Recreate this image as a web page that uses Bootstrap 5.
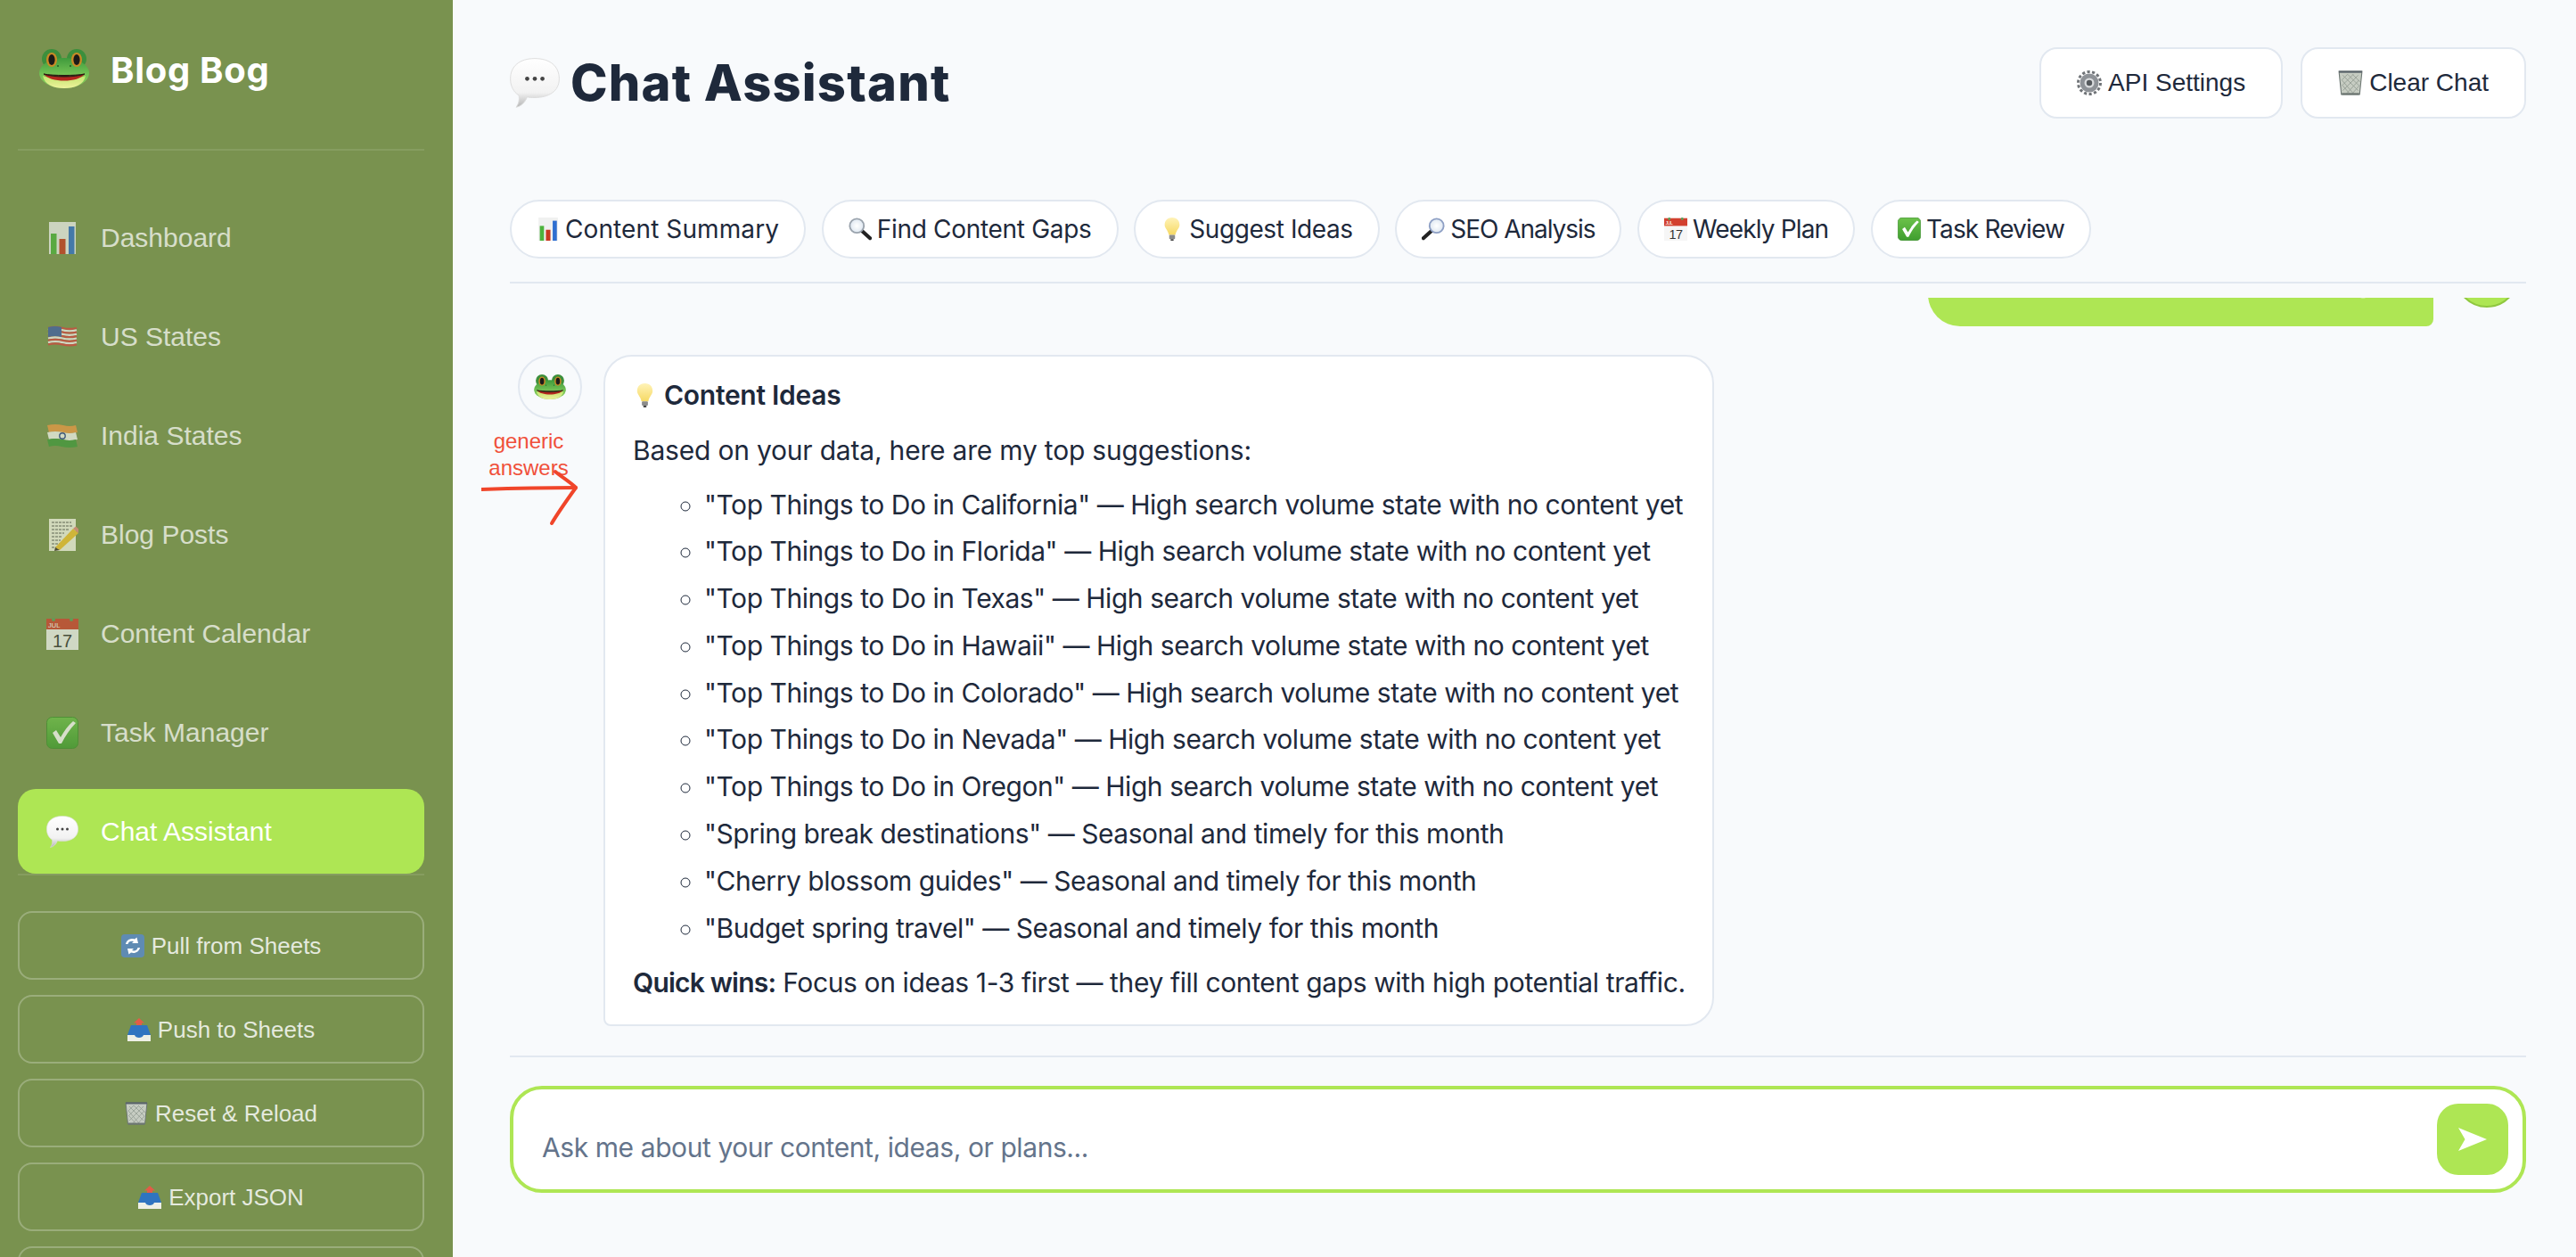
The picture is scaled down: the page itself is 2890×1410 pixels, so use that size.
<!doctype html>
<html lang="en">
<head>
<meta charset="utf-8">
<title>Blog Bog - Chat Assistant</title>
<link href="https://cdn.jsdelivr.net/npm/bootstrap@5.3.0/dist/css/bootstrap.min.css" rel="stylesheet">
<style>
html,body{height:100%;overflow:hidden}
body{background:#f8fafc;color:#1e293b;font-family:"Liberation Sans",Arial,sans-serif}
.shell{height:1410px;position:relative}
.side{width:508px;flex:0 0 508px;background:#79924f;padding:0 32px 0 20px;overflow:hidden}
.side>*{flex-shrink:0}
.brand{height:169px;border-bottom:2px solid rgba(255,255,255,.1);padding:55px 0 0 24px;color:#fff;font:700 40px/44px Inter,sans-serif;letter-spacing:.7px;gap:24px}
.brandtxt{margin-top:2px}
.navlist{padding-top:50px;gap:16px}
.navitem{height:95px;padding-left:32px;gap:25px;font-size:30px;color:#fff;opacity:.7;text-decoration:none;border-radius:20px}
.navitem.on{opacity:1;background:#aee654}
.acts{border-top:2px solid rgba(255,255,255,.1);padding-top:40px;gap:17px}
.actbtn{height:77px;flex:0 0 77px;border:2px solid rgba(255,255,255,.25);border-radius:16px;color:rgba(255,255,255,.82);font-size:26px;line-height:1;background:transparent;gap:8px;padding:0}
.mainp{padding:0 56px 0 64px;min-width:0}
.top{height:224px;padding-top:53px}
.pagetitle{font:800 56px/80px Inter,sans-serif;color:#1e293b;margin:0;gap:12px;letter-spacing:1.2px}
.topbtn{height:80px;background:#fff;border:2px solid #e2e8f0;border-radius:20px;font-size:28px;color:#1e293b;padding:0 40px 0 40px;gap:7px;line-height:1}
.pillbar{padding-bottom:26px;border-bottom:2px solid #e2e8f0;gap:17.6px}
.pill{height:66px;background:#fff;border:2px solid #e2e8f0;border-radius:33px;font:400 28px/1 Inter,sans-serif;color:#1e293b;padding:0 28px;gap:6px}
.ls1{letter-spacing:.1px}.ls2{letter-spacing:-.3px}.ls3{letter-spacing:-.4px}.ls4{letter-spacing:-1.05px}.ls5{letter-spacing:-.85px}
.msgs{margin-top:16px;overflow:hidden;padding-bottom:33px;gap:32px;min-height:0}
.urow{gap:24px;padding-right:8px}
.ububble{width:567px;height:120px;background:#aee654;color:#fff;border-radius:36px 36px 8px 36px;padding:0 30px 23px 14px;font:400 30px/51px Inter,sans-serif;letter-spacing:-.45px;white-space:nowrap;overflow:hidden}
.uav{width:72px;height:72px;flex:0 0 72px;border-radius:50%;background:#aee654;border:2px solid #8fc73f;margin-bottom:21px}
.botrow{gap:24px;padding-left:9px}
.botav{width:72px;height:72px;flex:0 0 72px;border-radius:50%;border:2px solid #e2e8f0;background:#f8fafc}
.bbubble{width:1246px;height:753px;background:#fff;border:2px solid #e2e8f0;border-radius:32px 32px 32px 8px;padding:13px 20px 0 31px;font:400 30px/53px Inter,sans-serif}
.bhead{font-weight:600;gap:8px;height:60px;letter-spacing:-.28px}
.bpara{margin:0;height:66.5px;line-height:64px;letter-spacing:-.2px}
.bquick{margin:4.5px 0 0;line-height:61px;white-space:nowrap;letter-spacing:-.38px}
.bquick strong{letter-spacing:-.8px}
.blist{margin:0;padding-left:80px;list-style:circle;letter-spacing:-.45px}
.blist li{height:52.8px;line-height:52.8px;white-space:nowrap}
.inwrap{border-top:2px solid #e2e8f0;padding-top:32px;height:226px;flex:0 0 226px}
.inbox{height:120px;border:4px solid #aee654;border-radius:36px;background:#fff;padding:0 16px 0 32px}
.inbox textarea{border:0;padding:0;background:transparent;box-shadow:none;resize:none;font:400 30px/40px Inter,sans-serif;letter-spacing:-.42px;color:#1e293b;height:40px;min-height:40px;margin-top:17px}
.inbox textarea::placeholder{color:#64748b;opacity:1}
.sendbtn{width:80px;height:80px;flex:0 0 80px;border-radius:24px;background:#aee654;border:0;padding:0}
.note{position:absolute;left:530px;top:480px;width:126px;height:112px;color:#f0503a;font-size:24px;line-height:30px;text-align:center;pointer-events:none}
.notearrow{position:absolute;left:10px;top:45px}
.fade{position:absolute;left:0;right:0;bottom:0;height:70px;background:linear-gradient(to bottom,rgba(60,70,80,0),rgba(60,70,80,.09));pointer-events:none}
</style>
</head>
<body>
<svg class="d-block" width="0" height="0" aria-hidden="true">
<defs>
<linearGradient id="gfrog" x1="0" y1="0" x2="0" y2="1"><stop offset="0" stop-color="#3f9a3c"/><stop offset=".55" stop-color="#74c255"/><stop offset="1" stop-color="#8ccf5c"/></linearGradient>
<linearGradient id="gchin" x1="0" y1="0" x2="0" y2="1"><stop offset="0" stop-color="#c3e56d"/><stop offset="1" stop-color="#eef29c"/></linearGradient>
<linearGradient id="gcheck" x1="0" y1="0" x2="0" y2="1"><stop offset="0" stop-color="#6cc24a"/><stop offset="1" stop-color="#3f9e2f"/></linearGradient>
<linearGradient id="gbub" x1="0" y1="0" x2="0" y2="1"><stop offset="0" stop-color="#fff"/><stop offset=".7" stop-color="#f2f2f2"/><stop offset="1" stop-color="#b5b5b5"/></linearGradient>
<linearGradient id="gbulb" x1="0" y1="0" x2="0" y2="1"><stop offset="0" stop-color="#fff3b8"/><stop offset="1" stop-color="#f6d964"/></linearGradient>
<radialGradient id="gglass"><stop offset="0" stop-color="#fff"/><stop offset="1" stop-color="#dfe8f2"/></radialGradient>
<symbol id="i-frog" viewBox="0 0 56 44">
<circle cx="14" cy="11" r="11" fill="#3c8f3c"/><circle cx="42" cy="11" r="11" fill="#3c8f3c"/>
<ellipse cx="28" cy="27" rx="28" ry="17" fill="url(#gfrog)"/>
<path d="M4 30C14 34 42 34 52 30C50 40 40 44 28 44C16 44 6 40 4 30Z" fill="url(#gchin)"/>
<path d="M5 28C16 32 40 32 51 28C44 38 12 38 5 28Z" fill="#b3261e"/>
<path d="M5 28C16 32 40 32 51 28C40 30 16 30 5 28Z" fill="#2a1a12" stroke="#2a1a12"/>
<ellipse cx="14" cy="12" rx="6" ry="8" fill="#c98a26"/><ellipse cx="42" cy="12" rx="6" ry="8" fill="#c98a26"/>
<ellipse cx="14" cy="12" rx="3.6" ry="6" fill="#1c1a18"/><ellipse cx="42" cy="12" rx="3.6" ry="6" fill="#1c1a18"/>
<circle cx="21" cy="19" r="1" fill="#1f5c22"/><circle cx="35" cy="19" r="1" fill="#1f5c22"/>
</symbol>
<symbol id="i-chart" viewBox="0 0 36 36">
<rect x="3" y="0" width="30" height="36" fill="#f0f1f0"/>
<rect x="5" y="13" width="6.5" height="23" fill="#4cb33c"/><rect x="14.500" y="19" width="7" height="17" fill="#c9381f"/><rect x="25" y="5" width="6.500" height="31" fill="#2f6fd0"/>
</symbol>
<symbol id="i-us" viewBox="0 0 36 36">
<g fill="none" stroke-width="2.300">
<path d="M2 8q8-2 16 0t16 0" stroke="#d6433f"/><path d="M2 10.300q8-2 16 0t16 0" stroke="#f6f3f3"/>
<path d="M2 12.600q8-2 16 0t16 0" stroke="#d6433f"/><path d="M2 14.900q8-2 16 0t16 0" stroke="#f6f3f3"/>
<path d="M2 17.200q8-2 16 0t16 0" stroke="#d6433f"/><path d="M2 19.500q8-2 16 0t16 0" stroke="#f6f3f3"/>
<path d="M2 21.800q8-2 16 0t16 0" stroke="#d6433f"/><path d="M2 24.100q8-2 16 0t16 0" stroke="#f6f3f3"/>
<path d="M2 26.400q8-2 16 0t16 0" stroke="#d6433f"/>
</g>
<path d="M2 7q8-2 15 0V18q-7-2-15 0Z" fill="#3f5da8"/>
</symbol>
<symbol id="i-in" viewBox="0 0 36 36">
<g fill="none" stroke-width="8">
<path d="M2 10q8-2 16 0t16 0" stroke="#ef9a45"/><path d="M2 18q8-2 16 0t16 0" stroke="#f7f7f3"/><path d="M2 26q8-2 16 0t16 0" stroke="#3f9a3c"/>
</g>
<circle cx="18" cy="18" r="3.200" fill="none" stroke="#27408b" stroke-width="1.400"/>
</symbol>
<symbol id="i-memo" viewBox="0 0 36 36">
<rect x="3" y="0" width="30" height="36" fill="#f8f7ea"/>
<path d="M6 4h22M6 8h24M6 12h20M6 16h14M6 20h12M6 24h10M6 28h10M6 32h8" stroke="#555" stroke-width="1" stroke-dasharray="3 1"/>
<path d="M10 32L30 11L36 16L15 35Z" fill="#f4c430"/><path d="M30 11L33 8.500L38 13L36 16Z" fill="#e98b80"/><path d="M10 32L15 35L9 36Z" fill="#3a2f25"/>
</symbol>
<symbol id="i-cal" viewBox="0 0 36 36">
<rect x="0" y="1" width="36" height="35" fill="#f6f6f6"/><rect x="0" y="1" width="36" height="12" fill="#d2402f"/>
<circle cx="8" cy="2" r="2" fill="#5aa05a"/><circle cx="28" cy="2" r="2" fill="#5aa05a"/>
<text x="2" y="11" font-family="Liberation Sans" font-size="7.500" fill="#fff">JUL</text>
<text x="18" y="33" font-family="Liberation Sans" font-size="20" text-anchor="middle" fill="#333">17</text>
</symbol>
<symbol id="i-check" viewBox="0 0 36 36">
<rect x="0.500" y="0.500" width="35" height="35" rx="6" fill="url(#gcheck)" stroke="#3d8f2c"/>
<path d="M7 18L11 15L16 23C20 16 24 10 30 5L33 7C26 14 21 22 17 30L14 30Z" fill="#fff"/>
</symbol>
<symbol id="i-bub" viewBox="0 0 36 36">
<path d="M18 .4C29 .4 35.600 6 35.600 15C35.600 24 28 28.600 18 28.600C16 28.600 14 28.600 12.500 28.100C11 32 8 35 4.500 35.500C6.500 33 7 30 6.500 27C2.500 24.500 .4 20 .4 15C.4 6 7 .4 18 .4Z" fill="url(#gbub)" stroke="#dcdcdc" stroke-width=".6"/>
<circle cx="12.500" cy="15" r="1.500" fill="#444"/><circle cx="18" cy="15" r="1.500" fill="#444"/><circle cx="23.500" cy="15" r="1.500" fill="#444"/>
</symbol>
<symbol id="i-sync" viewBox="0 0 26 26">
<rect width="26" height="26" rx="4" fill="#5f8bb3"/>
<path d="M5 11C6 6 11 4 15 5.500L17.500 3.500L19 10L12 10L14 8C11 7 8 8 7.500 11Z" fill="#fff"/>
<path d="M21 15C20 20 15 22 11 20.500L8.500 22.500L7 16L14 16L12 18C15 19 18 18 18.500 15Z" fill="#fff"/>
</symbol>
<symbol id="i-out" viewBox="0 0 26 26">
<path d="M13 0L19 5.500H16V12H10V5.500H7Z" fill="#e25c47"/>
<path d="M4 8H22L26 19V26H0V19Z" fill="#2f74c0"/>
<path d="M0 19H8C9 23 17 23 18 19H26V26H0Z" fill="#eef0e6"/>
</symbol>
<symbol id="i-trash" viewBox="0 0 26 26">
<path d="M1 1H25L22.500 25H3.500Z" fill="#c6ccc2" stroke="#6c7672" stroke-width="1"/>
<path d="M1 1.500H25" stroke="#59636a" stroke-width="2"/>
<path d="M5 5L21 21M10 4L22 16M15 4L23 12M4 10L16 24M5 16L12 24M21 5L5 21M16 4L4 16M10 4L4 10M22 10L9 24M22 16L15 24" stroke="#8d978d" stroke-width=".7"/>
<rect x="4" y="23.500" width="18" height="2" fill="#6c7672"/>
</symbol>
<symbol id="i-lensl" viewBox="0 0 28 28">
<path d="M15 15L26 25" stroke="#222" stroke-width="4.500" stroke-linecap="round"/>
<circle cx="10" cy="10" r="8.500" fill="url(#gglass)" stroke="#9aa3ad" stroke-width="2"/>
</symbol>
<symbol id="i-lensr" viewBox="0 0 28 28">
<path d="M13 15L2 25" stroke="#222" stroke-width="4.500" stroke-linecap="round"/>
<circle cx="18" cy="10" r="8.500" fill="url(#gglass)" stroke="#8d9fc4" stroke-width="2"/>
</symbol>
<symbol id="i-bulb" viewBox="0 0 28 28">
<path d="M14 0C20 0 23 4 23 9C23 13 19 15 18 21H10C9 15 5 13 5 9C5 4 8 0 14 0Z" fill="url(#gbulb)"/>
<rect x="10.500" y="21" width="7" height="5" rx="1" fill="#8b8b8b"/><rect x="12" y="26" width="4" height="2" rx="1" fill="#444"/>
</symbol>
<symbol id="i-gear" viewBox="0 0 28 28">
<circle cx="14" cy="14" r="12.500" fill="none" stroke="#6f7377" stroke-width="3" stroke-dasharray="3.200 2.400"/>
<circle cx="14" cy="14" r="10.500" fill="#8e9297"/><circle cx="14" cy="14" r="5.500" fill="#d9dbdd"/><circle cx="14" cy="14" r="3.200" fill="#55595d"/>
</symbol>
</defs>
</svg>

<div class="shell d-flex">
  <aside class="side d-flex flex-column">
    <div class="brand d-flex align-items-start">
      <svg width="56" height="44"><use href="#i-frog"/></svg><span class="brandtxt">Blog Bog</span>
    </div>
    <nav class="navlist d-flex flex-column">
      <a class="navitem d-flex align-items-center" href="#"><svg width="36" height="36"><use href="#i-chart"/></svg>Dashboard</a>
      <a class="navitem d-flex align-items-center" href="#"><svg width="36" height="36"><use href="#i-us"/></svg>US States</a>
      <a class="navitem d-flex align-items-center" href="#"><svg width="36" height="36"><use href="#i-in"/></svg>India States</a>
      <a class="navitem d-flex align-items-center" href="#"><svg width="36" height="36"><use href="#i-memo"/></svg>Blog Posts</a>
      <a class="navitem d-flex align-items-center" href="#"><svg width="36" height="36"><use href="#i-cal"/></svg>Content Calendar</a>
      <a class="navitem d-flex align-items-center" href="#"><svg width="36" height="36"><use href="#i-check"/></svg>Task Manager</a>
      <a class="navitem on d-flex align-items-center" href="#"><svg width="36" height="36"><use href="#i-bub"/></svg>Chat Assistant</a>
    </nav>
    <div class="acts d-flex flex-column">
      <button class="actbtn btn d-flex align-items-center justify-content-center" type="button"><svg width="26" height="26"><use href="#i-sync"/></svg>Pull from Sheets</button>
      <button class="actbtn btn d-flex align-items-center justify-content-center" type="button"><svg width="26" height="26"><use href="#i-out"/></svg>Push to Sheets</button>
      <button class="actbtn btn d-flex align-items-center justify-content-center" type="button"><svg width="26" height="26"><use href="#i-trash"/></svg>Reset &amp; Reload</button>
      <button class="actbtn btn d-flex align-items-center justify-content-center" type="button"><svg width="26" height="26"><use href="#i-out"/></svg>Export JSON</button>
      <button class="actbtn btn d-flex align-items-center justify-content-center" type="button"></button>
    </div>
  </aside>

  <main class="mainp flex-grow-1 d-flex flex-column">
    <header class="top d-flex justify-content-between align-items-start flex-shrink-0">
      <h1 class="pagetitle d-flex align-items-center"><svg width="56" height="56"><use href="#i-bub"/></svg>Chat Assistant</h1>
      <div class="d-flex">
        <button class="topbtn btn d-flex align-items-center me-1" type="button"><svg width="28" height="28"><use href="#i-gear"/></svg>API Settings</button>
        <button class="topbtn btn d-flex align-items-center ms-3" type="button"><svg width="28" height="28"><use href="#i-trash"/></svg>Clear Chat</button>
      </div>
    </header>
    <div class="pillbar d-flex flex-shrink-0">
      <button class="pill btn d-flex align-items-center ls1" type="button"><svg width="26" height="26"><use href="#i-chart"/></svg>Content Summary</button>
      <button class="pill btn d-flex align-items-center ls2" type="button"><svg width="26" height="26"><use href="#i-lensl"/></svg>Find Content Gaps</button>
      <button class="pill btn d-flex align-items-center ls3" type="button"><svg width="26" height="26"><use href="#i-bulb"/></svg>Suggest Ideas</button>
      <button class="pill btn d-flex align-items-center ls4" type="button"><svg width="26" height="26"><use href="#i-lensr"/></svg>SEO Analysis</button>
      <button class="pill btn d-flex align-items-center ls5" type="button"><svg width="26" height="26"><use href="#i-cal"/></svg>Weekly Plan</button>
      <button class="pill btn d-flex align-items-center ls5" type="button"><svg width="26" height="26"><use href="#i-check"/></svg>Task Review</button>
    </div>
    <section class="msgs flex-grow-1 d-flex flex-column justify-content-end">
      <div class="urow d-flex justify-content-end align-items-end flex-shrink-0">
        <div class="ububble d-flex align-items-end">What is the top article I should blog</div>
        <div class="uav"></div>
      </div>
      <div class="botrow d-flex align-items-start flex-shrink-0">
        <div class="botav d-flex align-items-center justify-content-center"><svg width="36" height="28"><use href="#i-frog"/></svg></div>
        <div class="bbubble">
          <div class="bhead d-flex align-items-center"><svg width="27" height="27"><use href="#i-bulb"/></svg>Content Ideas</div>
          <p class="bpara">Based on your data, here are my top suggestions:</p>
          <ul class="blist">
            <li>"Top Things to Do in California" — High search volume state with no content yet</li>
            <li>"Top Things to Do in Florida" — High search volume state with no content yet</li>
            <li>"Top Things to Do in Texas" — High search volume state with no content yet</li>
            <li>"Top Things to Do in Hawaii" — High search volume state with no content yet</li>
            <li>"Top Things to Do in Colorado" — High search volume state with no content yet</li>
            <li>"Top Things to Do in Nevada" — High search volume state with no content yet</li>
            <li>"Top Things to Do in Oregon" — High search volume state with no content yet</li>
            <li>"Spring break destinations" — Seasonal and timely for this month</li>
            <li>"Cherry blossom guides" — Seasonal and timely for this month</li>
            <li>"Budget spring travel" — Seasonal and timely for this month</li>
          </ul>
          <p class="bquick"><strong class="fw-semibold">Quick wins:</strong> Focus on ideas 1-3 first — they fill content gaps with high potential traffic.</p>
        </div>
      </div>
    </section>
    <div class="inwrap flex-shrink-0">
      <div class="inbox d-flex align-items-center">
        <textarea class="form-control flex-grow-1" rows="1" placeholder="Ask me about your content, ideas, or plans..."></textarea>
        <button class="sendbtn btn d-flex align-items-center justify-content-center" type="button" aria-label="Send">
          <svg width="32" height="26" viewBox="0 0 32 26"><path d="M0 0L32 13L0 26L7.500 13Z" fill="#fff"/></svg>
        </button>
      </div>
    </div>
  </main>

  <div class="note">generic<br>answers
    <svg class="notearrow" width="120" height="70" viewBox="0 0 120 70" fill="none" stroke="#f0452a" stroke-width="4" stroke-linecap="round" stroke-linejoin="round"><path d="M0 24C30 23 70 22 106 22"/><path d="M83 4C90 10 100 16 106 22C96 36 86 50 79 62"/></svg>
  </div>
  <div class="fade"></div>
</div>
<script src="https://cdn.jsdelivr.net/npm/bootstrap@5.3.0/dist/js/bootstrap.bundle.min.js"></script>
</body>
</html>
